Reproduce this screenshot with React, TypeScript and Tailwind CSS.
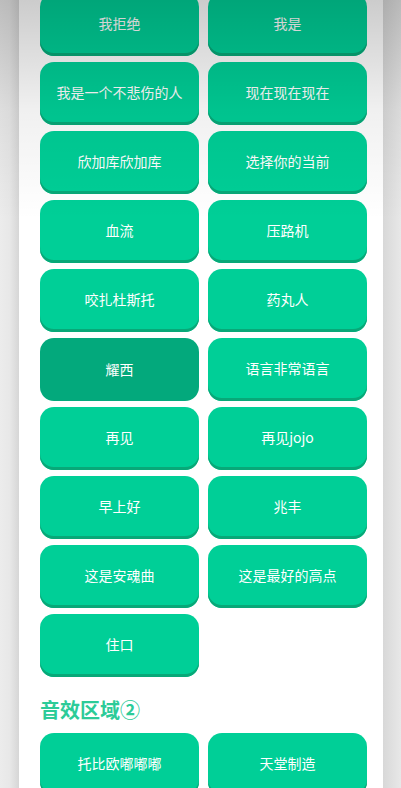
import React from "react";

const rows: string[][] = [
  ["我拒绝", "我是"],
  ["我是一个不悲伤的人", "现在现在现在"],
  ["欣加库欣加库", "选择你的当前"],
  ["血流", "压路机"],
  ["咬扎杜斯托", "药丸人"],
  ["耀西", "语言非常语言"],
  ["再见", "再见jojo"],
  ["早上好", "兆丰"],
  ["这是安魂曲", "这是最好的高点"],
  ["住口"],
];

function Btn({ label, active }: { label: string; active?: boolean }) {
  return (
    <div
      className={
        active
          ? "h-[63px] rounded-[14px] bg-[#03a97c] flex items-center justify-center text-white text-[14px]"
          : "h-[63px] rounded-[14px] bg-[#00cf97] shadow-[inset_0_-3px_0_#08a878] flex items-center justify-center text-white text-[14px] pb-[3px]"
      }
    >
      {label}
    </div>
  );
}

export default function App() {
  const all = rows.flat();
  return (
    <div
      className="relative w-[401px] h-[788px] overflow-hidden flex bg-[#e6e6e6]"
      style={{ fontFamily: '"Noto Sans CJK SC", "Noto Sans", sans-serif' }}
    >
      <div className="w-[19px] shrink-0 bg-gradient-to-r from-[#ececec] via-[#e8e8e8] to-[#d6d6d6]" />
      <div className="w-[364px] shrink-0 bg-white pl-[21px] pr-[16px]">
        <div className="-mt-[7px] grid grid-cols-2 gap-x-[9px] gap-y-[6px]">
          {all.map((l) => (
            <Btn key={l} label={l} active={l === "耀西"} />
          ))}
        </div>
        <div className="mt-[20px] mb-[10px] text-[20px] font-bold text-[#2ccb98] leading-[26px]">
          音效区域②
        </div>
        <div className="grid grid-cols-2 gap-x-[9px] gap-y-[6px]">
          <Btn label="托比欧嘟嘟嘟" />
          <Btn label="天堂制造" />
        </div>
      </div>
      <div className="flex-1 bg-gradient-to-r from-[#d8d8d8] to-[#e8e8e8]" />
      <div className="pointer-events-none absolute left-0 top-0 w-full h-[220px] bg-gradient-to-b from-[rgba(0,0,0,0.2)] via-[rgba(0,0,0,0.06)] to-transparent" />
    </div>
  );
}
